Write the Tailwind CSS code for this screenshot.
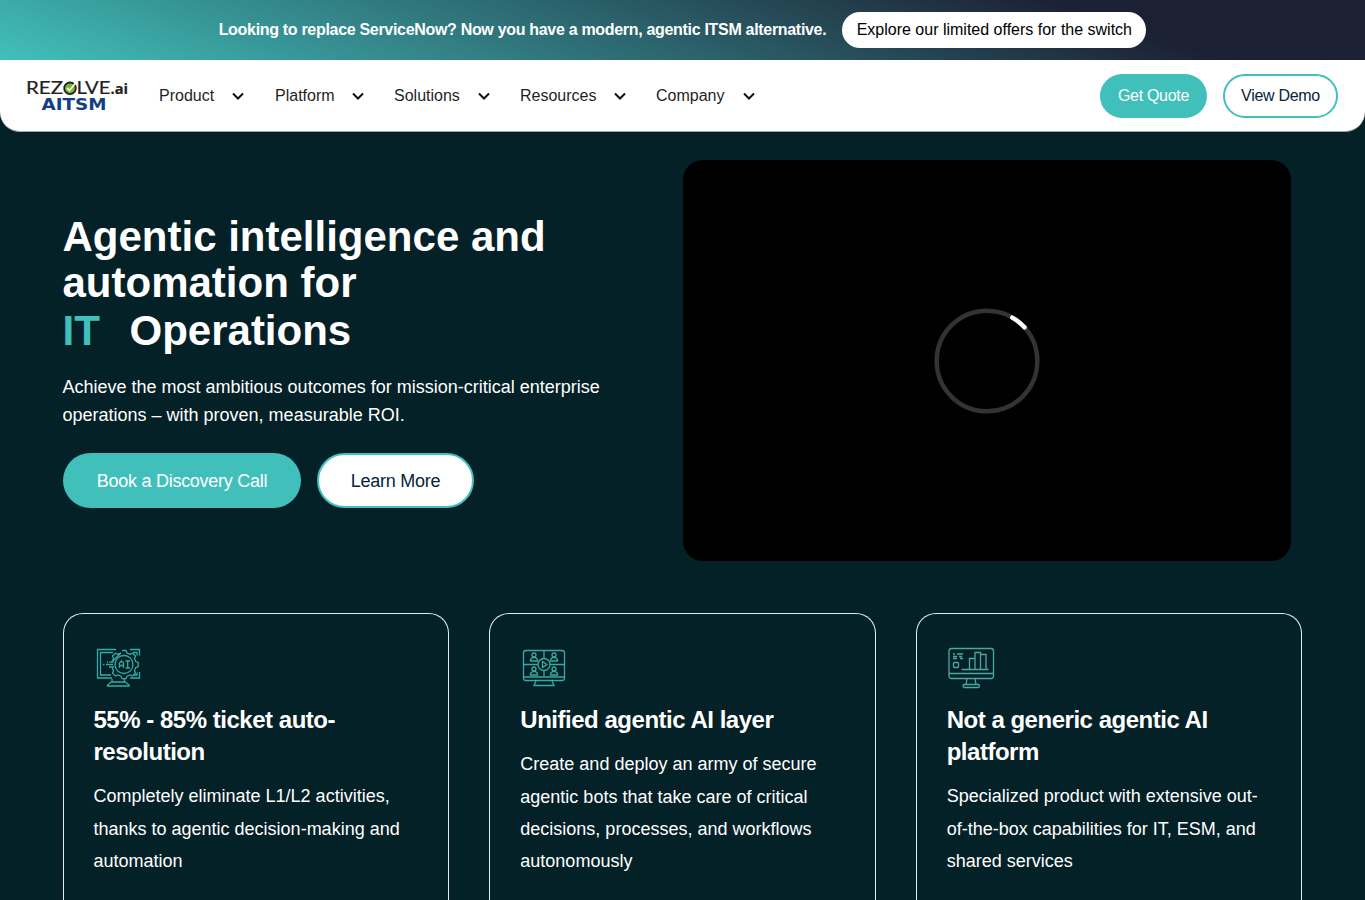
<!DOCTYPE html>
<html lang="en">
<head>
  <meta charset="UTF-8" />
  <title>Rezolve.ai AITSM</title>
  <script src="https://cdn.jsdelivr.net/npm/@tailwindcss/browser@4"></script>
</head>
<body class="bg-[#042127] h-[900px] overflow-hidden font-[Helvetica,'Liberation_Sans',Arial,sans-serif] text-white">
  <!-- Offer banner -->
  <div class="h-[60px] flex items-center justify-center gap-4 bg-[linear-gradient(20deg,#41c0bb_0%,#1c2033_80%)]">
    <span class="text-base font-bold tracking-[-0.31px] whitespace-nowrap">Looking to replace ServiceNow? Now you have a modern, agentic ITSM alternative.</span>
    <a class="h-9 w-[304px] rounded-full bg-white text-black flex items-center justify-center whitespace-nowrap">Explore our limited offers for the switch</a>
  </div>

  <!-- Header -->
  <header class="h-[72px] bg-white rounded-b-[20px] border-b border-[#9aa5a8] flex items-center pl-[26px] pr-[27px] text-[#1f1f1f]">
    <svg class="w-[102px] h-8 mr-[31px] overflow-visible" viewBox="0 0 102 32">
      <g font-family="Lato" fill="#222" stroke="#222" stroke-width="0.200">
        <text x="0" y="14.300" font-size="16.500" textLength="37" lengthAdjust="spacingAndGlyphs">REZ</text>
        <text x="50.500" y="14.300" font-size="16.500" textLength="34" lengthAdjust="spacingAndGlyphs">LVE</text>
        <text x="84.500" y="14.300" font-size="15" font-weight="bold" font-family="Open Sans" textLength="17.500" lengthAdjust="spacingAndGlyphs">.ai</text>
      </g>
      <circle cx="44" cy="8.300" r="5.800" fill="#78b82a" stroke="#222" stroke-width="1.800" />
      <path d="M41 8l2.500 2.500L50 2.500" fill="none" stroke="#fff" stroke-width="1.800" />
      <text x="15.500" y="30" font-size="16.500" font-weight="bold" font-family="DejaVu Sans" fill="#123e82" textLength="65" lengthAdjust="spacingAndGlyphs">AITSM</text>
    </svg>
    <nav class="flex items-center text-base">
      <a class="flex items-center justify-between w-[85px] mr-[31px]">Product <svg class="w-3 h-3" viewBox="0 0 12 12" fill="none" stroke="#111" stroke-width="2"><path d="M1 3.500L6 8.500 11 3.500" /></svg></a>
      <a class="flex items-center justify-between w-[89px] mr-[30px]">Platform <svg class="w-3 h-3" viewBox="0 0 12 12" fill="none" stroke="#111" stroke-width="2"><path d="M1 3.500L6 8.500 11 3.500" /></svg></a>
      <a class="flex items-center justify-between w-[96px] mr-[30px]">Solutions <svg class="w-3 h-3" viewBox="0 0 12 12" fill="none" stroke="#111" stroke-width="2"><path d="M1 3.500L6 8.500 11 3.500" /></svg></a>
      <a class="flex items-center justify-between w-[106px] mr-[30px]">Resources <svg class="w-3 h-3" viewBox="0 0 12 12" fill="none" stroke="#111" stroke-width="2"><path d="M1 3.500L6 8.500 11 3.500" /></svg></a>
      <a class="flex items-center justify-between w-[99px]">Company <svg class="w-3 h-3" viewBox="0 0 12 12" fill="none" stroke="#111" stroke-width="2"><path d="M1 3.500L6 8.500 11 3.500" /></svg></a>
    </nav>
    <div class="ml-auto flex gap-4 text-base tracking-[-0.3px]">
      <a class="w-[107px] h-11 rounded-full bg-[#41c0bb] text-white flex items-center justify-center">Get Quote</a>
      <a class="w-[115px] h-11 rounded-full border-2 border-[#41c0bb] text-[#06243b] flex items-center justify-center">View Demo</a>
    </div>
  </header>

  <!-- Hero -->
  <section class="pl-[62.5px] pr-[74px] pt-7 flex justify-between">
    <div class="w-[580px] pt-[54px]">
      <h1 class="text-[42px] font-bold leading-[46.2px] whitespace-nowrap">Agentic intelligence and<br />automation for<span class="block h-12 leading-[50px]"><span class="text-[#41c0bb] inline-block w-[67px]">IT</span>Operations</span></h1>
      <p class="mt-[18.6px] text-lg leading-7 whitespace-nowrap">Achieve the most ambitious outcomes for mission-critical enterprise<br />operations – with proven, measurable ROI.</p>
      <div class="mt-6 pl-[0.5px] flex gap-4 text-lg tracking-[-0.27px]">
        <a class="w-[238px] h-[55px] rounded-full bg-[#41c0bb] flex items-center justify-center">Book a Discovery Call</a>
        <a class="w-[157px] h-[55px] rounded-full border-2 border-[#41c0bb] bg-white text-[#06243b] flex items-center justify-center">Learn More</a>
      </div>
    </div>
    <div class="w-[608px] h-[401px] rounded-[20px] bg-black flex items-center justify-center">
      <svg class="w-[106px] h-[106px]" viewBox="0 0 106 106" fill="none" stroke-width="4.500">
        <circle cx="53" cy="53" r="50.300" stroke="#333" />
        <path d="M78.300 9.600A50.300 50.300 0 0 1 90.500 19.300" stroke="#fff" stroke-linecap="round" />
      </svg>
    </div>
  </section>

  <!-- Cards -->
  <section class="mt-[52px] px-[63px] grid grid-cols-3 gap-10">
    <div class="h-[287px] border border-b-0 border-[#e5e9f5] rounded-t-[20px] px-[29.5px] pt-[30px]">
      <svg class="w-12 h-12" viewBox="0 0 48 48" fill="none" stroke="#36aaa6" stroke-width="1.300">
        <path d="M22 5.500H3.500V34H18M19 8.500H6.500V31H17M36 5.500h9.500v6M45.500 28v6H36M39 8.500h4v3M43 28.500V31h-4" />
        <path d="M18 35v2.500L13.500 41v1H35v-1l-4.500-3.500V35M17 38h14" />
        <path d="M28 6.500h4l1 2.500 3 1.200 2.500-1 3 2.800-1 2.500 1.200 3 2.500 1v4l-2.500 1.200-1.200 3 1 2.500-3 2.800-2.500-1-3 1.200-1 2.500h-4l-1-2.500-3-1.200-2.500 1-3-2.800 1-2.500-1.200-3M18.300 17.500l1.200-3-1-2.500 3-2.800 2.500 1 3-1.200z" />
        <circle cx="30" cy="20.500" r="9" />
        <path d="M25.500 24v-5l2-2 2 2v5M25.500 21.500h4M31.500 17h4.500M33.700 17v7M31.500 24h4.500M9 20.500h1.500M12 20.500h7M13 18h1M15.500 18h4M15 23h5" />
      </svg>
      <h3 class="mt-3 text-2xl leading-8 font-bold tracking-[-0.48px]">55% - 85% ticket auto-<br />resolution</h3>
      <p class="pt-[12.15px] text-lg leading-[32.4px] whitespace-nowrap">Completely eliminate L1/L2 activities,<br />thanks to agentic decision-making and<br />automation</p>
    </div>
    <div class="h-[287px] border border-b-0 border-[#e5e9f5] rounded-t-[20px] px-[30px] pt-[30px]">
      <svg class="w-12 h-12" viewBox="0 0 48 48" fill="none" stroke="#36aaa6" stroke-width="1.300">
        <rect x="3.500" y="6.500" width="41" height="30" rx="2.500" />
        <path d="M3.500 33h41M3.500 20.500H18M30 20.500h14.500M24 6.500V14M24 27v6M16 37l-2 4.500h20L32 37" />
        <circle cx="24" cy="20.500" r="6" />
        <path d="M22.500 17.500l4.500 3-4.500 3z" />
        <circle cx="14" cy="11" r="2" /><path d="M10.500 17v-1.500l2-2h3l2 2V17z" />
        <circle cx="34" cy="11" r="2" /><path d="M30.500 17v-1.500l2-2h3l2 2V17z" />
        <circle cx="14" cy="25" r="2" /><path d="M10.500 31v-1.500l2-2h3l2 2V31z" />
        <circle cx="34" cy="25" r="2" /><path d="M30.500 31v-1.500l2-2h3l2 2V31z" />
      </svg>
      <h3 class="mt-3 text-2xl leading-8 font-bold tracking-[-0.48px]">Unified agentic AI layer</h3>
      <p class="pt-[12.15px] text-lg leading-[32.4px] whitespace-nowrap">Create and deploy an army of secure<br />agentic bots that take care of critical<br />decisions, processes, and workflows<br />autonomously</p>
    </div>
    <div class="h-[287px] border border-b-0 border-[#e5e9f5] rounded-t-[20px] px-[30px] pt-[30px]">
      <svg class="w-12 h-12" viewBox="0 0 48 48" fill="none" stroke="#4ea6a2" stroke-width="1.300">
        <rect x="2" y="4.500" width="44.500" height="30" rx="2.500" />
        <path d="M2 29.500h44.500M14.500 25.500h27M22.500 25.500v-11h5.500M28 25.500v-17h5.500v17M33.500 10.500H39v15M20 35l-1 5.500M28 35l1 5.500" />
        <rect x="16" y="40.500" width="16.500" height="3" rx="1.500" />
        <rect x="6.500" y="18.500" width="5" height="5" rx="1" />
        <path d="M6 10h2M10 10h6M6 12.500h4M12 12.500h3M6 14.500h4M13 14.500h3" />
      </svg>
      <h3 class="mt-3 text-2xl leading-8 font-bold tracking-[-0.48px]">Not a generic agentic AI<br />platform</h3>
      <p class="pt-[12.15px] text-lg leading-[32.4px] whitespace-nowrap">Specialized product with extensive out-<br />of-the-box capabilities for IT, ESM, and<br />shared services</p>
    </div>
  </section>
</body>
</html>
